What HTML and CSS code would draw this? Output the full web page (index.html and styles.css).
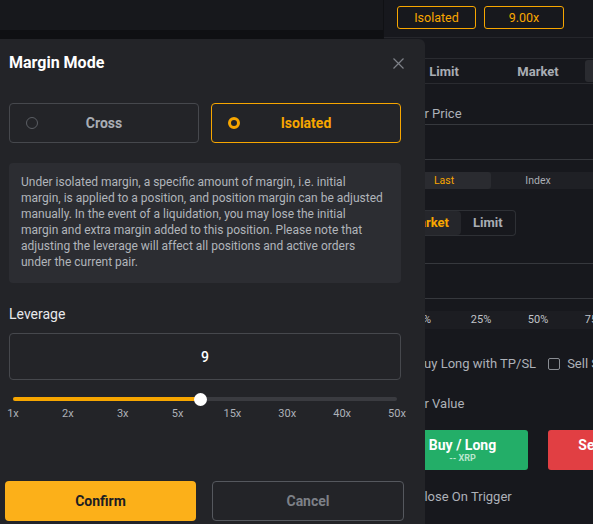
FILE: index.html
```html
<!DOCTYPE html>
<html>
<head>
<meta charset="utf-8">
<link rel="stylesheet" href="styles.css">
</head>
<body>
<div class="page">
  <div class="left">
    <div class="left-top"></div>
    <div class="left-strip"></div>
  </div>
  <div class="panel">
    <div class="mode-row">
      <div class="mode-btn">Isolated</div>
      <div class="mode-btn lev">9.00x</div>
    </div>
    <div class="order-tabs">
      <span class="otab">Limit</span>
      <span class="otab">Market</span>
      <span class="otab-box"></span>
    </div>
    <div class="field"><span>Order Price</span></div>
    <div class="field empty"></div>
    <div class="seg">
      <span class="seg-item on">Last</span>
      <span class="seg-item">Index</span>
    </div>
    <div class="mtoggle">
      <span class="mt on">Market</span>
      <span class="mt">Limit</span>
    </div>
    <div class="field empty tall"></div>
    <div class="field empty"></div>
    <div class="pct">
      <span>0%</span><span>25%</span><span>50%</span><span>75%</span>
    </div>
    <div class="checks">
      <span class="chk"><i class="box"></i>Buy Long with TP/SL</span>
      <span class="chk"><i class="box"></i>Sell Short with TP/SL</span>
    </div>
    <div class="value">Order Value</div>
    <div class="trade">
      <div class="tbtn buy"><b>Buy / Long</b><small>-- XRP</small></div>
      <div class="tbtn sell"><b>Sell / Short</b><small>-- XRP</small></div>
    </div>
    <div class="chk close"><i class="box"></i>Close On Trigger</div>
  </div>

  <div class="modal">
    <div class="m-head">
      <h2 class="m-title">Margin Mode</h2>
      <svg class="m-close" width="11" height="11" viewBox="0 0 11 11"><path d="M0.5 0.5L10.5 10.5M10.5 0.5L0.5 10.5" stroke="#7d8087" stroke-width="1.2" fill="none"/></svg>
    </div>
    <div class="choices">
      <div class="choice">
        <span class="radio"></span>
        <span class="choice-label">Cross</span>
      </div>
      <div class="choice active">
        <span class="radio"></span>
        <span class="choice-label">Isolated</span>
      </div>
    </div>
    <div class="info">Under isolated margin, a specific amount of margin, i.e. initial margin, is applied to a position, and position margin can be adjusted manually. In the event of a liquidation, you may lose the initial margin and extra margin added to this position. Please note that adjusting the leverage will affect all positions and active orders under the current pair.</div>
    <div class="lev-label">Leverage</div>
    <div class="lev-input">9</div>
    <div class="slider">
      <div class="track">
        <div class="fill" style="width:48.7%"></div>
        <div class="thumb" style="left:48.7%"></div>
      </div>
      <div class="ticks">
        <span>1x</span><span>2x</span><span>3x</span><span>5x</span><span>15x</span><span>30x</span><span>40x</span><span>50x</span>
      </div>
    </div>
    <div class="actions">
      <div class="btn confirm">Confirm</div>
      <div class="btn cancel">Cancel</div>
    </div>
  </div>
</div>
</body>
</html>
```

FILE: styles.css
```css
* { box-sizing: border-box; }
html, body { margin: 0; padding: 0; }
body {
  width: 593px;
  height: 524px;
  overflow: hidden;
  background: #17181d;
  font-family: Roboto, "Noto Sans", "Liberation Sans", sans-serif;
  color: #adb1b8;
}
.page {
  position: relative;
  display: flex;
  width: 593px;
  height: 524px;
  overflow: hidden;
}
.left {
  width: 383px;
  flex: none;
  background: #1c1d22;
}
.left-top { height: 30px; background: #17181c; }
.left-strip { height: 9px; background: #0f1013; }

.panel {
  flex: 1;
  min-width: 0;
  overflow: hidden;
  background: #17181d;
  border-left: 1px solid #101114;
  white-space: nowrap;
}
.mode-row {
  display: flex;
  gap: 8px;
  height: 38px;
  padding: 6px 0 0 13px;
  border-bottom: 1px solid #25262b;
}
.mode-btn {
  width: 79px;
  height: 23px;
  border: 1px solid #f7a600;
  border-radius: 3px;
  color: #f7a600;
  font-size: 12.5px;
  line-height: 21px;
  text-align: center;
}
.mode-btn.lev { width: 80px; }
.order-tabs {
  display: flex;
  align-items: center;
  height: 26px;
  margin-top: 20px;
  padding-left: 13px;
  border-top: 1px solid #2a2b30;
  border-bottom: 1px solid #2a2b30;
  font-size: 13px;
  font-weight: 700;
  color: #a9adb4;
}
.otab { width: 94px; text-align: center; flex: none; }
.otab-box {
  margin-left: auto;
  width: 8px;
  height: 22px;
  background: #2a2b30;
  border-radius: 3px 0 0 3px;
}
.field {
  height: 41px;
  padding: 22px 0 0 13px;
  border-bottom: 1px solid #36383d;
  font-size: 13px;
  color: #adb1b8;
}
.field.empty { height: 35px; padding: 0; }
.field.tall { height: 28px; }
.seg {
  display: flex;
  height: 17px;
  margin-top: 12px;
  background: #1f2025;
  font-size: 10.5px;
  line-height: 17px;
}
.seg-item { width: 94px; text-align: center; color: #a9adb4; border-radius: 3px; flex: none; }
.seg-item.on { width: 107px; padding-left: 13px; background: #2a2b30; color: #f7a600; }
.mtoggle {
  display: inline-flex;
  margin: 21px 0 0 0;
  height: 26px;
  border: 1px solid #2e3035;
  border-left: none;
  border-radius: 0 4px 4px 0;
  font-size: 13px;
  font-weight: 700;
  line-height: 24px;
}
.mt { padding: 0 12px; color: #a9adb4; }
.mt.on {
  width: 77px;
  padding: 0 12px 0 0;
  text-align: right;
  background: #25262b;
  color: #f7a600;
  border-radius: 0 4px 4px 0;
}
.pct {
  display: flex;
  height: 18px;
  margin-top: 12px;
  padding-left: 11.5px;
  background: #1c1d22;
  font-size: 11px;
  line-height: 18px;
  color: #c0c3c8;
}
.pct span { width: 57px; text-align: center; flex: none; }
.checks {
  display: flex;
  gap: 12px;
  margin-top: 27px;
  font-size: 13px;
}
.chk { display: flex; align-items: center; gap: 7px; color: #adb1b8; font-size: 13px; }
.checks .chk:first-child { padding-left: 13px; }
.box {
  display: inline-block;
  width: 12px;
  height: 12px;
  border: 1px solid #8a8d93;
  border-radius: 2px;
}
.value { margin-top: 25px; padding-left: 13px; font-size: 13px; }
.trade {
  display: flex;
  gap: 20px;
  margin-top: 19px;
  padding-left: 13px;
}
.tbtn {
  flex: none;
  width: 131px;
  height: 40px;
  border-radius: 3px;
  display: flex;
  flex-direction: column;
  align-items: center;
  justify-content: center;
  color: #fff;
}
.tbtn b { font-size: 14px; line-height: 16px; }
.tbtn small { font-size: 9px; line-height: 11px; font-weight: 700; color: #b9e6cd; }
.buy { background: #23ae68; }
.sell { background: #e13f43; }
.sell small { color: #f3c0c1; }
.chk.close { margin-top: 19px; padding-left: 13px; }

/* modal */
.modal {
  position: absolute;
  left: 0;
  top: 39px;
  width: 425px;
  height: 485px;
  background: #232428;
  border-radius: 0 6px 0 0;
  padding: 14px 24px 0 9px;
  display: flex;
  flex-direction: column;
}
.m-head {
  display: flex;
  align-items: center;
  justify-content: space-between;
  height: 20px;
}
.m-title {
  margin: 0;
  font-size: 16px;
  font-weight: 700;
  color: #ffffff;
  line-height: 20px;
}
.m-close { margin-right: -3px; }
.choices {
  display: flex;
  gap: 12px;
  margin-top: 30px;
}
.choice {
  position: relative;
  flex: 1;
  height: 40px;
  border: 1px solid #46484d;
  border-radius: 4px;
  display: flex;
  align-items: center;
  justify-content: center;
}
.choice .radio {
  position: absolute;
  left: 16px;
  top: 13px;
  width: 12px;
  height: 12px;
  border: 1px solid #5b5e64;
  border-radius: 50%;
}
.choice-label {
  font-size: 14px;
  font-weight: 700;
  color: #a9adb4;
}
.choice.active { border-color: #f7a600; }
.choice.active .radio {
  border: 3.5px solid #f7a600;
  background: #232428;
}
.choice.active .choice-label { color: #f7a600; }
.info {
  margin-top: 20px;
  padding: 11px 16.5px 13px 12px;
  background: #2c2d32;
  border-radius: 4px;
  font-size: 12px;
  line-height: 16px;
  color: #b1b5bb;
}
.lev-label {
  margin-top: 21px;
  font-size: 14px;
  line-height: 20px;
  color: #e8e9eb;
}
.lev-input {
  margin-top: 9px;
  height: 47px;
  border: 1px solid #46484d;
  border-radius: 4px;
  display: flex;
  align-items: center;
  justify-content: center;
  font-size: 14px;
  font-weight: 500;
  color: #ffffff;
}
.slider {
  margin-top: 13px;
  padding: 0 4px;
}
.track {
  position: relative;
  height: 4px;
  margin-top: 4px;
  background: #3a3b40;
  border-radius: 2px;
}
.fill {
  height: 4px;
  background: #f7a600;
  border-radius: 2px;
}
.thumb {
  position: absolute;
  top: -4.5px;
  width: 13px;
  height: 13px;
  margin-left: -6.5px;
  background: #ffffff;
  border-radius: 50%;
}
.ticks {
  display: grid;
  grid-template-columns: repeat(8, 1fr);
  margin: 6px -27.43px 0;
  font-size: 11px;
  line-height: 14px;
  color: #adb1b8;
}
.ticks span { text-align: center; }
.actions {
  display: flex;
  gap: 16px;
  margin: auto 0 3px -4px;
  width: 399px;
}
.btn {
  height: 40px;
  border-radius: 4px;
  display: flex;
  align-items: center;
  justify-content: center;
  font-size: 14px;
  font-weight: 700;
}
.confirm { width: 191px; background: #fcb019; color: #1c1d22; }
.cancel { width: 192px; border: 1px solid #55585e; color: #7d8087; }
```
